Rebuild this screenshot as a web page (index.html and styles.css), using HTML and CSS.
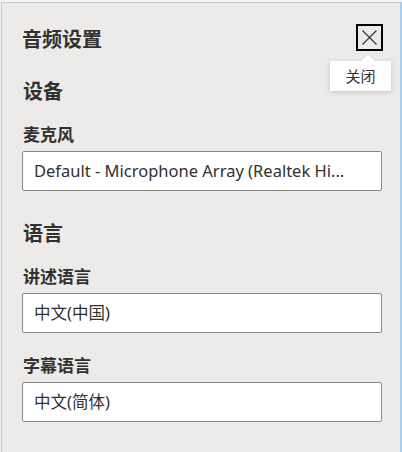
FILE: index.html
```html
<!DOCTYPE html>
<html lang="zh-CN">
<head>
<meta charset="utf-8">
<title>音频设置</title>
<link rel="stylesheet" href="styles.css">
</head>
<body>
<div class="panel">
  <div class="header">
    <h1 class="title">音频设置</h1>
    <button class="close" aria-label="关闭">
      <svg width="15" height="15" viewBox="0 0 15 15"><path d="M0.5 0.5 L14.5 14.5 M14.5 0.5 L0.5 14.5" stroke="#323130" stroke-width="1.1" fill="none"/></svg>
    </button>
    <div class="tooltip">关闭</div>
  </div>

  <h2 class="section">设备</h2>
  <div class="field">
    <div class="label">麦克风</div>
    <div class="input">Default - Microphone Array (Realtek Hi...</div>
  </div>

  <h2 class="section section-gap">语言</h2>
  <div class="field">
    <div class="label">讲述语言</div>
    <div class="input">中文(中国)</div>
  </div>
  <div class="field field-gap">
    <div class="label">字幕语言</div>
    <div class="input">中文(简体)</div>
  </div>
</div>
</body>
</html>
```
FILE: styles.css
```css
html, body {
  margin: 0;
  padding: 0;
}
body {
  background: #f4f4f4;
  font-family: "Segoe UI", "Noto Sans", "Noto Sans CJK SC", sans-serif;
  color: #323130;
  height: 452px;
  overflow: hidden;
}
.panel {
  margin: 2px 0 0 1px;
  height: 460px;
  box-sizing: border-box;
  background: #edebe9;
  border-top: 1px solid #c8c6c4;
  border-left: 1px solid #c8c6c4;
  border-right: 2px solid #a9cdef;
  padding: 21px 18px 0 20px;
}
.header {
  position: relative;
  display: flex;
  justify-content: space-between;
  align-items: flex-start;
  height: 31px;
}
.title {
  margin: 0;
  padding-top: 1px;
  font-size: 20px;
  line-height: 28px;
  font-weight: 700;
  font-family: "Noto Sans CJK SC", sans-serif;
}
.close {
  width: 27px;
  height: 27px;
  margin-right: -1px;
  box-sizing: border-box;
  border: 2px solid #000;
  background: transparent;
  padding: 0;
  display: flex;
  align-items: center;
  justify-content: center;
}
.tooltip {
  position: absolute;
  right: -9px;
  top: 37px;
  width: 61px;
  height: 30px;
  box-sizing: border-box;
  background: #fff;
  box-shadow: 0 1px 5px rgba(0,0,0,0.18);
  font-size: 15px;
  line-height: 30px;
  text-align: center;
  font-family: "Noto Sans CJK SC", sans-serif;
  color: #323130;
}
.tooltip::before {
  content: "";
  position: absolute;
  top: -5px;
  left: 33px;
  width: 10px;
  height: 10px;
  background: #fff;
  transform: rotate(45deg);
  box-shadow: -1px -1px 2px rgba(0,0,0,0.08);
}
.section {
  margin: 22px 0 0 1px;
  font-size: 20px;
  line-height: 28px;
  font-weight: 700;
  font-family: "Noto Sans CJK SC", sans-serif;
}
.section-gap {
  margin-top: 28px;
}
.field {
  margin-top: 18px;
}
.field-gap {
  margin-top: 21px;
}
.label {
  margin-left: 1px;
  font-size: 17px;
  line-height: 22px;
  font-weight: 700;
  font-family: "Noto Sans CJK SC", sans-serif;
  margin-bottom: 6px;
}
.input {
  height: 40px;
  box-sizing: border-box;
  background: #fff;
  border: 1px solid #8a8886;
  border-radius: 2px;
  padding: 0 11px;
  font-size: 16.5px;
  line-height: 38px;
  white-space: nowrap;
  overflow: hidden;
}
```
